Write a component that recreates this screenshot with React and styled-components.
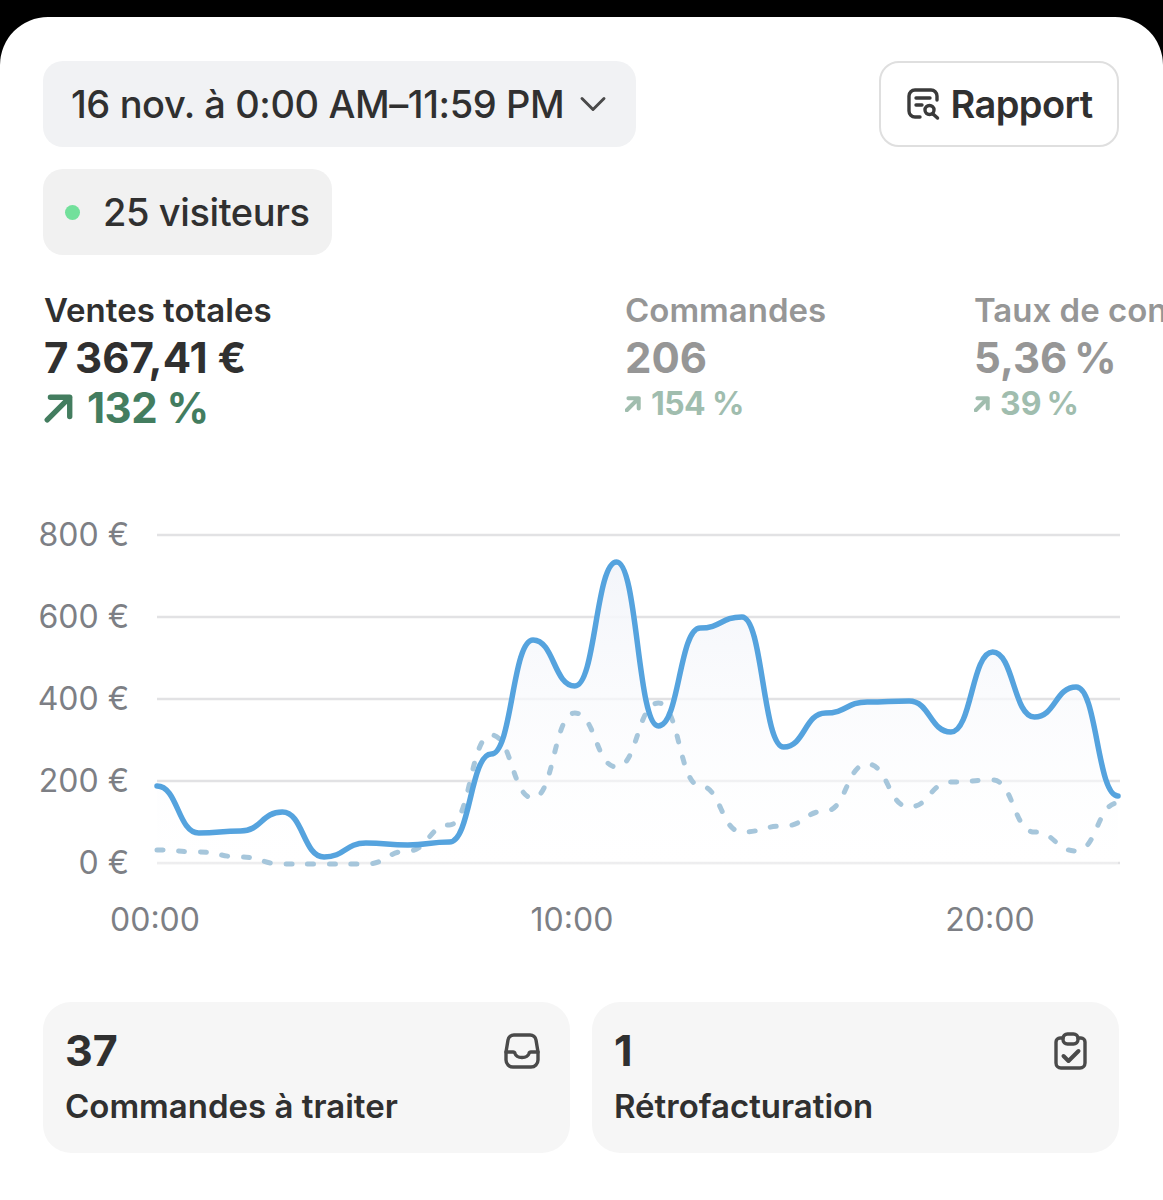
import styled, { createGlobalStyle } from 'styled-components'
import { ChevronDown } from 'lucide-react'

const GlobalStyle = createGlobalStyle`
  html, body {
    margin: 0;
    padding: 0;
    background: #000;
  }
  body {
    font-family: Inter, "Noto Sans", sans-serif;
    color: #303030;
  }
`

const Page = styled.div`
  height: 1200px;
  padding-top: 17px;
  box-sizing: border-box;
  overflow: hidden;
`

const Sheet = styled.div`
  height: 1183px;
  background: #fff;
  border-radius: 48px 48px 0 0;
  overflow: hidden;
`

const Header = styled.div`
  padding: 44px 44px 0 43px;
`

const TopRow = styled.div`
  display: flex;
  justify-content: space-between;
  align-items: flex-start;
`

const Pill = styled.div`
  display: flex;
  align-items: center;
  height: 86px;
  box-sizing: border-box;
  background: #f1f2f4;
  border-radius: 20px;
  font-size: 38px;
  font-weight: 500;
  letter-spacing: -0.4px;
  white-space: nowrap;
`

const DatePill = styled(Pill)`
  width: 593px;
  padding-left: 28px;
  gap: 7px;
`

const VisitorPill = styled(Pill)`
  width: 289px;
  margin-top: 22px;
  padding-left: 22px;
  gap: 23px;
  background: #f1f1f1;
`

const Dot = styled.span`
  width: 15px;
  height: 15px;
  border-radius: 50%;
  background: #72e09b;
`

const ReportButton = styled.div`
  display: flex;
  align-items: center;
  justify-content: center;
  gap: 11px;
  width: 240px;
  height: 86px;
  box-sizing: border-box;
  border: 2px solid #dfdfdf;
  border-radius: 20px;
  font-size: 38px;
  font-weight: 600;
  letter-spacing: -0.6px;
`

const Metrics = styled.div`
  display: flex;
  margin-top: 33px;
  padding-left: 44px;
  height: 148px;
  overflow: hidden;
`

const Metric = styled.div`
  flex: 0 0 ${(props) => props.$width}px;
  white-space: nowrap;
  opacity: ${(props) => (props.$active ? 1 : 0.5)};
`

const MetricLabel = styled.div`
  font-size: 33px;
  line-height: 44px;
  font-weight: 600;
`

const MetricValue = styled.div`
  font-size: 42px;
  line-height: 52px;
  font-weight: 700;
  letter-spacing: ${(props) => props.$tracking || 0}px;
`

const MetricDelta = styled.div`
  display: flex;
  align-items: center;
  gap: ${(props) => (props.$large ? 13 : 10)}px;
  margin-top: ${(props) => (props.$large ? 0 : 1)}px;
  color: #437d5f;
  font-size: ${(props) => (props.$large ? 42 : 32)}px;
  line-height: ${(props) => (props.$large ? 48 : 38)}px;
  font-weight: 700;
  letter-spacing: ${(props) => (props.$large ? -0.5 : -0.6)}px;
`

const Chart = styled.svg`
  display: block;
  margin-top: 79px;
  width: 1163px;
  height: 440px;
`

const AxisLabel = styled.text`
  font-family: Inter, "Noto Sans", sans-serif;
  font-size: 32px;
  font-weight: 400;
  fill: #7d7f85;
`

const Cards = styled.div`
  display: grid;
  grid-template-columns: 527px 527px;
  gap: 22px;
  margin-top: 47px;
  padding: 0 44px 0 43px;
`

const Card = styled.div`
  position: relative;
  height: 151px;
  box-sizing: border-box;
  padding: 23px 22px;
  background: #f6f6f6;
  border-radius: 28px;
`

const CardValue = styled.div`
  font-size: 43px;
  line-height: 50px;
  font-weight: 700;
`

const CardLabel = styled.div`
  margin-top: 11px;
  font-size: 33px;
  line-height: 40px;
  font-weight: 600;
`

const CardIcon = styled.svg`
  position: absolute;
  top: ${(props) => props.$top}px;
  right: ${(props) => props.$right}px;
`

// hourly values, in chart pixels
const sales = [786, 833, 831, 812, 857, 843, 845, 842, 754, 640, 686, 562, 726, 628, 617, 747, 713, 702, 701, 732, 652, 717, 687, 796]
const previous = [850, 852, 857, 864, 864, 864, 851, 825, 735, 798, 713, 767, 703, 786, 832, 826, 811, 764, 807, 782, 780, 832, 851, 803]

const hourX = (i) => 157 + (i * 961) / 23

// flat tangent at every point, like d3's curveBumpX
function bump(values) {
  let d = `M${hourX(0)} ${values[0]}`
  for (let i = 1; i < values.length; i++) {
    const mid = (hourX(i - 1) + hourX(i)) / 2
    d += ` C${mid} ${values[i - 1]} ${mid} ${values[i]} ${hourX(i)} ${values[i]}`
  }
  return d
}

const gridLines = [
  { y: 535, label: '800 €' },
  { y: 617, label: '600 €' },
  { y: 699, label: '400 €' },
  { y: 781, label: '200 €' },
  { y: 863, label: '0 €' },
]

const hours = [
  { x: 155, label: '00:00' },
  { x: 572, label: '10:00' },
  { x: 990, label: '20:00' },
]

function UpArrow({ size, strokeWidth }) {
  return (
    <svg width={size} height={size} viewBox="0 0 28 28" fill="none">
      <path
        d="M3 25 L24 4 M6 4 H24 V22"
        stroke="currentColor"
        strokeWidth={strokeWidth}
        strokeLinecap="round"
        strokeLinejoin="round"
      />
    </svg>
  )
}

function ReportIcon() {
  return (
    <svg width="34" height="34" viewBox="0 0 34 34" fill="none" stroke="#3a3a3a" strokeWidth="3.4" strokeLinecap="round">
      <path d="M31 13 V9 a6 6 0 0 0 -6 -6 H9 a6 6 0 0 0 -6 6 V24 a6 6 0 0 0 6 6 h5" />
      <path d="M10 11 H24 M10 18 H16" />
      <circle cx="23.5" cy="23" r="4.5" />
      <path d="M27 27 L31.5 31" />
    </svg>
  )
}

function Inbox() {
  return (
    <CardIcon $top={31} $right={30} width="36" height="36" viewBox="0 0 36 36" fill="none" stroke="#4a4a4a" strokeWidth="3.4" strokeLinejoin="round" strokeLinecap="round">
      <path d="M10 2 H26 a6 6 0 0 1 6 5 L34 19 V27 a7 7 0 0 1 -7 7 H9 a7 7 0 0 1 -7 -7 V19 L4 7 a6 6 0 0 1 6 -5 Z" />
      <path d="M2 19 H9 a2 2 0 0 1 2 1.5 c1 3 4 4 7 4 s6 -1 7 -4 a2 2 0 0 1 2 -1.5 H34" />
    </CardIcon>
  )
}

function ClipboardDone() {
  return (
    <CardIcon $top={30} $right={32} width="33" height="38" viewBox="0 0 33 38" fill="none" stroke="#4a4a4a" strokeWidth="3.4" strokeLinejoin="round" strokeLinecap="round">
      <path d="M9 6 H6 a4 4 0 0 0 -4 4 V31 a5 5 0 0 0 5 5 H26 a5 5 0 0 0 5 -5 V10 a4 4 0 0 0 -4 -4 H24" />
      <rect x="9" y="2" width="15" height="10" rx="4.5" />
      <path d="M9.5 24 L14.5 29 L24.5 19" strokeWidth="4" />
    </CardIcon>
  )
}

function SalesChart() {
  const line = bump(sales)
  return (
    <Chart viewBox="0 515 1163 440">
      <defs>
        <linearGradient id="area" x1="0" y1="560" x2="0" y2="864" gradientUnits="userSpaceOnUse">
          <stop offset="0" stopColor="#f3f5fa" />
          <stop offset="1" stopColor="#fff" stopOpacity="0.4" />
        </linearGradient>
      </defs>
      {gridLines.map((g) => (
        <g key={g.y}>
          <line x1="157" x2="1120" y1={g.y} y2={g.y} stroke="#e2e2e4" strokeWidth="2.5" />
          <AxisLabel x="129" y={g.y + 11} textAnchor="end">{g.label}</AxisLabel>
        </g>
      ))}
      {hours.map((h) => (
        <AxisLabel key={h.x} x={h.x} y="931" textAnchor="middle">{h.label}</AxisLabel>
      ))}
      <path d={`${line} L1118 864 L157 864 Z`} fill="url(#area)" />
      <path
        d={bump(previous)}
        fill="none"
        stroke="#a6c6db"
        strokeWidth="5"
        strokeLinecap="round"
        strokeDasharray="6 15.7"
      />
      <path d={line} fill="none" stroke="#55a3de" strokeWidth="5.5" strokeLinecap="round" strokeLinejoin="round" />
    </Chart>
  )
}

export default function App() {
  return (
    <Page>
      <GlobalStyle />
      <Sheet>
        <Header>
          <TopRow>
            <DatePill>
              16 nov. à 0:00 AM–11:59 PM
              <ChevronDown size={44} strokeWidth={1.6} color="#4a4a4a" />
            </DatePill>
            <ReportButton>
              <ReportIcon />
              Rapport
            </ReportButton>
          </TopRow>
          <VisitorPill>
            <Dot />
            25 visiteurs
          </VisitorPill>
        </Header>

        <Metrics>
          <Metric $width={581} $active>
            <MetricLabel>Ventes totales</MetricLabel>
            <MetricValue $tracking={0.3}>7{'\u202F'}367,41 €</MetricValue>
            <MetricDelta $large>
              <UpArrow size={30} strokeWidth={5} />
              132 %
            </MetricDelta>
          </Metric>
          <Metric $width={349}>
            <MetricLabel>Commandes</MetricLabel>
            <MetricValue>206</MetricValue>
            <MetricDelta>
              <UpArrow size={16} strokeWidth={7} />
              154 %
            </MetricDelta>
          </Metric>
          <Metric $width={400}>
            <MetricLabel>Taux de conversion</MetricLabel>
            <MetricValue $tracking={-0.6}>5,36{'\u202F'}%</MetricValue>
            <MetricDelta>
              <UpArrow size={16} strokeWidth={7} />
              39{'\u202F'}%
            </MetricDelta>
          </Metric>
        </Metrics>

        <SalesChart />

        <Cards>
          <Card>
            <CardValue>37</CardValue>
            <CardLabel>Commandes à traiter</CardLabel>
            <Inbox />
          </Card>
          <Card>
            <CardValue>1</CardValue>
            <CardLabel>Rétrofacturation</CardLabel>
            <ClipboardDone />
          </Card>
        </Cards>
      </Sheet>
    </Page>
  )
}
